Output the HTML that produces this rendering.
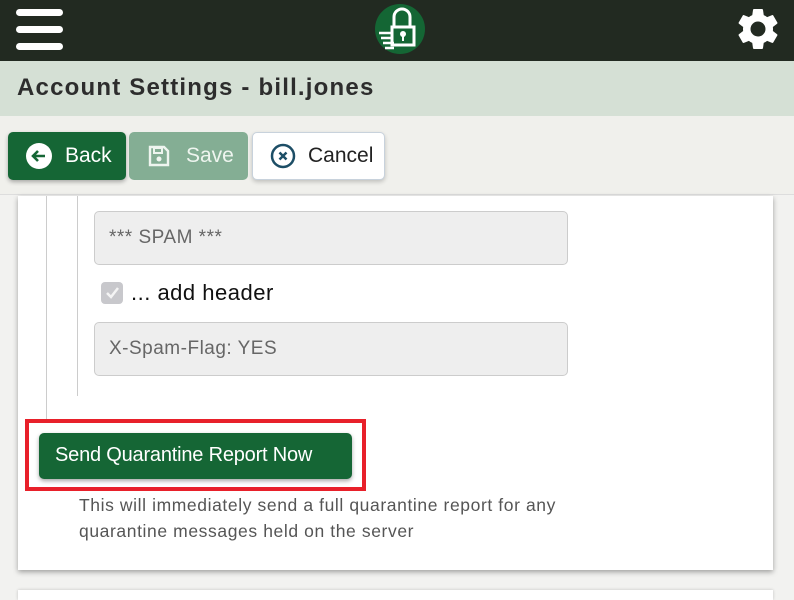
<!DOCTYPE html>
<html><head><meta charset="utf-8"><style>
*{box-sizing:border-box;margin:0;padding:0}
body{width:794px;height:596px;overflow:hidden;background:#f2f2f0;font-family:"Liberation Sans",sans-serif;position:relative}
.top{position:absolute;left:0;top:0;width:794px;height:61px;background:#222a21}
.title{position:absolute;left:0;top:61px;width:794px;height:55px;background:#d5e0d5}
.title h1{position:absolute;left:17px;top:13px;font-size:24px;font-weight:bold;color:#2d2d2d;letter-spacing:1.2px}
.tb{position:absolute;left:0;top:116px;width:794px;height:79px;background:#f0f0ec;border-bottom:1px solid #ddd}
.btn{position:absolute;top:16px;height:48px;border-radius:5px;font-size:21px;display:flex;align-items:center}
.card{position:absolute;left:18px;top:196px;width:755px;height:374px;background:#fff;box-shadow:0 2px 5px rgba(0,0,0,.35)}
.inp{position:absolute;left:94px;width:474px;height:54px;background:#eee;border:1px solid #ccc;border-radius:5px;color:#666;font-size:19px;padding:15px 0 0 14px;letter-spacing:0.5px}
</style></head><body>
<div class="top">
 <div style="position:absolute;left:16px;top:9px;width:47px;height:7px;background:#fff;border-radius:4px"></div>
 <div style="position:absolute;left:16px;top:26px;width:47px;height:7px;background:#fff;border-radius:4px"></div>
 <div style="position:absolute;left:16px;top:43px;width:47px;height:7px;background:#fff;border-radius:4px"></div>
 <svg style="position:absolute;left:374px;top:3px" width="52" height="52" viewBox="0 0 52 52">
  <circle cx="26" cy="26" r="25" fill="#146634"/>
  <path d="M20 24 V14 a8 8 0 0 1 16 0 V24" fill="none" stroke="#fff" stroke-width="3"/>
  <rect x="18" y="24" width="22" height="18" fill="none" stroke="#fff" stroke-width="3"/>
  <circle cx="29" cy="31" r="3" fill="#fff"/><rect x="28" y="32" width="2" height="6" fill="#fff"/>
  <path d="M5 30h13M7 35h12M9 40h11M11 45h9" stroke="#fff" stroke-width="2.5"/>
 </svg>
 <svg style="position:absolute;left:733px;top:4px" width="50" height="50" viewBox="0 0 24 24"><path fill="#fff" d="M19.14 12.94c.04-.3.06-.61.06-.94 0-.32-.02-.64-.07-.94l2.030-1.58a.49.49 0 0 0 .12-.61l-1.92-3.32a.49.49 0 0 0-.59-.22l-2.39.96c-.5-.38-1.03-.7-1.62-.94l-.36-2.54a.48.48 0 0 0-.48-.41h-3.84c-.24 0-.43.17-.47.41l-.36 2.54c-.59.24-1.13.57-1.62.94l-2.39-.96a.48.48 0 0 0-.59.22L2.74 8.87c-.12.21-.08.47.12.61l2.03 1.58c-.05.3-.09.63-.09.94s.02.64.07.94l-2.03 1.58a.49.49 0 0 0-.12.61l1.92 3.32c.12.22.37.29.59.22l2.39-.96c.5.38 1.03.7 1.62.94l.36 2.54c.05.24.24.41.48.41h3.84c.24 0 .44-.17.47-.41l.36-2.54c.59-.24 1.13-.56 1.62-.94l2.39.96c.22.08.47 0 .59-.22l1.92-3.32c.12-.22.07-.47-.12-.61l-2.010-1.58zM12 15.6A3.6 3.6 0 1 1 12 8.4a3.6 3.6 0 0 1 0 7.2z"/></svg>
</div>
<div class="title"><h1>Account Settings - bill.jones</h1></div>
<div class="tb">
 <div class="btn" style="left:8px;width:118px;background:#156635;color:#fff;box-shadow:0 2px 4px rgba(0,0,0,.3)">
  <svg style="margin-left:18px" width="26" height="26" viewBox="0 0 26 26"><circle cx="13" cy="13" r="13" fill="#fff"/><path d="M19 13H8M12 8l-5 5 5 5" fill="none" stroke="#156635" stroke-width="2.6"/></svg>
  <span style="margin-left:13px">Back</span></div>
 <div class="btn" style="left:129px;width:119px;background:#84ae94;color:#eef5ef">
  <svg style="margin-left:18px" width="24" height="24" viewBox="0 0 24 24"><path d="M3 3h14l4 4v14H3z" fill="none" stroke="#eef5ef" stroke-width="2.4"/><rect x="7" y="4" width="8" height="5" fill="none" stroke="#eef5ef" stroke-width="2"/><circle cx="12" cy="15" r="2.5" fill="#eef5ef"/></svg>
  <span style="margin-left:15px">Save</span></div>
 <div class="btn" style="left:252px;width:133px;background:#fff;color:#222;border:1px solid #c8d2dc;box-shadow:0 2px 4px rgba(0,0,0,.2)">
  <svg style="margin-left:17px" width="26" height="26" viewBox="0 0 26 26"><circle cx="13" cy="13" r="11" fill="none" stroke="#1d4e66" stroke-width="2.5"/><path d="M9.5 9.5l7 7M16.5 9.5l-7 7" stroke="#1d4e66" stroke-width="2.5"/></svg>
  <span style="margin-left:12px">Cancel</span></div>
</div>
<div class="card"></div>
<div style="position:absolute;left:46px;top:196px;width:1px;height:224px;background:#ccc"></div>
<div style="position:absolute;left:77px;top:196px;width:1px;height:200px;background:#ccc"></div>
<div class="inp" style="top:211px">*** SPAM ***</div>
<div style="position:absolute;left:101px;top:282px;width:22px;height:22px;background:#c8c8cc;border-radius:4px"><svg width="22" height="22"><path d="M6 11l4 4 7-9" fill="none" stroke="#f4f4f4" stroke-width="2.5"/></svg></div>
<div style="position:absolute;left:131px;top:280px;font-size:22px;color:#111;letter-spacing:0.5px">... add header</div>
<div class="inp" style="top:322px">X-Spam-Flag: YES</div>
<div style="position:absolute;left:25px;top:419px;width:341px;height:72px;border:4px solid #e8202a"></div>
<div style="position:absolute;left:39px;top:433px;width:313px;height:46px;background:#156635;border-radius:5px;color:#fff;font-size:20px;padding:11px 0 0 16px;letter-spacing:-0.2px;box-shadow:0 2px 4px rgba(0,0,0,.35);white-space:nowrap">Send Quarantine Report Now</div>
<div style="position:absolute;left:79px;top:492px;width:580px;font-size:17.5px;line-height:26px;color:#555;letter-spacing:0.6px">This will immediately send a full quarantine report for any<br>quarantine messages held on the server</div>
<div style="position:absolute;left:18px;top:590px;width:755px;height:10px;background:#fff;box-shadow:0 0 3px rgba(0,0,0,.2)"></div>
</body></html>
